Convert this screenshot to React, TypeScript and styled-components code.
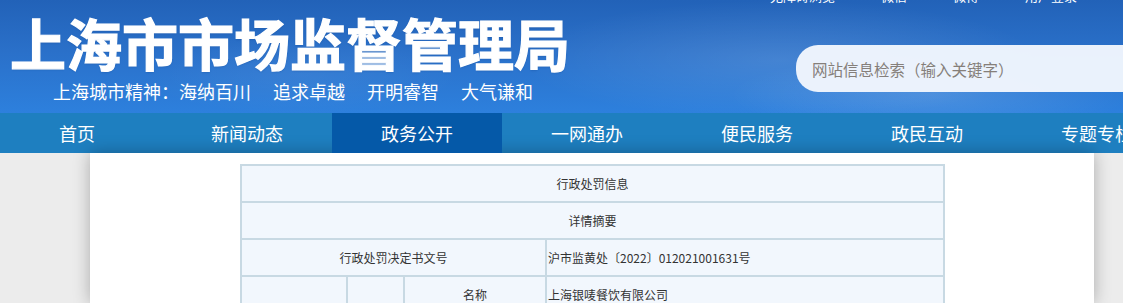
import React from 'react'
import styled, { createGlobalStyle } from 'styled-components'

const GlobalStyle = createGlobalStyle`
  html, body {
    margin: 0;
    padding: 0;
    background: #ececec;
    overflow: hidden;
  }

  body {
    font-family: "Noto Sans CJK SC", "Noto Sans", sans-serif;
  }
`

const Header = styled.header`
  height: 113px;
  overflow: hidden;
  background:
    radial-gradient(ellipse 260px 60px at 780px 60px, rgba(255, 255, 255, 0.12), transparent),
    radial-gradient(ellipse 200px 40px at 930px 95px, rgba(255, 255, 255, 0.14), transparent),
    radial-gradient(ellipse 160px 40px at 300px 75px, rgba(255, 255, 255, 0.06), transparent),
    linear-gradient(180deg, #2262b8 0%, #2a70c9 45%, #2d80dd 100%);
`

const TopLinks = styled.div`
  display: flex;
  gap: 46px;
  height: 0;
  padding-left: 770px;
  transform: translateY(-12px);
`

const TopLink = styled.a`
  font-size: 13px;
  line-height: 16px;
  color: #ffffff;
  white-space: nowrap;
`

const HeaderBody = styled.div`
  display: flex;
  align-items: flex-start;
`

const Brand = styled.div`
  display: flex;
  flex-direction: column;
  padding: 13px 0 0 10px;
`

const Title = styled.h1`
  margin: 0;
  font-size: 56px;
  line-height: 58px;
  font-weight: 700;
  color: #ffffff;
  white-space: nowrap;
  -webkit-text-stroke: 1.2px #ffffff;
  text-shadow: 0 1px 2px rgba(0, 40, 100, 0.25);
`

const Slogan = styled.div`
  display: flex;
  gap: 22px;
  margin: 9px 0 0 43px;
  font-size: 18px;
  line-height: 22px;
  color: #ffffff;
  white-space: nowrap;
`

const Search = styled.div`
  flex: none;
  display: flex;
  align-items: center;
  width: 380px;
  height: 47px;
  margin: 45px 0 0 226px;
  padding-left: 16px;
  box-sizing: border-box;
  border-radius: 22px 0 0 22px;
  background: rgba(241, 246, 253, 0.97);
  font-size: 15.5px;
  color: #857f7a;
  white-space: nowrap;
`

const Nav = styled.nav`
  display: flex;
  height: 40px;
  margin-left: -8px;
  background: #1e7fc0;
`

const NavItem = styled.a<{ $active?: boolean }>`
  flex: none;
  width: 170px;
  display: flex;
  align-items: center;
  justify-content: center;
  font-size: 18px;
  color: #ffffff;
  white-space: nowrap;
  background: ${(p) => (p.$active ? '#0559a8' : 'transparent')};
`

const Panel = styled.main`
  width: 1004px;
  height: 150px;
  margin-left: 90px;
  padding: 11px 0 0 150px;
  box-sizing: border-box;
  background: #ffffff;
  box-shadow: 0 0 16px rgba(0, 0, 0, 0.28);
`

const InfoTable = styled.table`
  width: 705px;
  border-collapse: collapse;
  table-layout: fixed;
  background: #f2f7fd;
  border: 2px solid #c8d9e3;
`

const Cell = styled.td<{ $align?: 'left' | 'center' }>`
  height: 35px;
  padding: 0 1px;
  border: 2px solid #c8d9e3;
  font-size: 12px;
  color: #333333;
  text-align: ${(p) => p.$align ?? 'center'};
  white-space: nowrap;
`

const navItems = ['首页', '新闻动态', '政务公开', '一网通办', '便民服务', '政民互动', '专题专栏']

const App = () => (
  <>
    <GlobalStyle />
    <Header>
      <TopLinks>
        <TopLink>无障碍浏览</TopLink>
        <TopLink>微信</TopLink>
        <TopLink>微博</TopLink>
        <TopLink>用户登录</TopLink>
        <TopLink>|</TopLink>
      </TopLinks>
      <HeaderBody>
        <Brand>
          <Title>上海市市场监督管理局</Title>
          <Slogan>
            <span>上海城市精神：海纳百川</span>
            <span>追求卓越</span>
            <span>开明睿智</span>
            <span>大气谦和</span>
          </Slogan>
        </Brand>
        <Search>网站信息检索（输入关键字）</Search>
      </HeaderBody>
    </Header>

    <Nav>
      {navItems.map((item) => (
        <NavItem key={item} $active={item === '政务公开'}>
          {item}
        </NavItem>
      ))}
    </Nav>

    <Panel>
      <InfoTable>
        <colgroup>
          <col style={{ width: 106 }} />
          <col style={{ width: 57 }} />
          <col style={{ width: 142 }} />
          <col />
        </colgroup>
        <tbody>
          <tr>
            <Cell colSpan={4}>行政处罚信息</Cell>
          </tr>
          <tr>
            <Cell colSpan={4}>详情摘要</Cell>
          </tr>
          <tr>
            <Cell colSpan={3}>行政处罚决定书文号</Cell>
            <Cell $align="left">沪市监黄处〔2022〕012021001631号</Cell>
          </tr>
          <tr>
            <Cell />
            <Cell />
            <Cell>名称</Cell>
            <Cell $align="left">上海银唛餐饮有限公司</Cell>
          </tr>
        </tbody>
      </InfoTable>
    </Panel>
  </>
)

export default App
